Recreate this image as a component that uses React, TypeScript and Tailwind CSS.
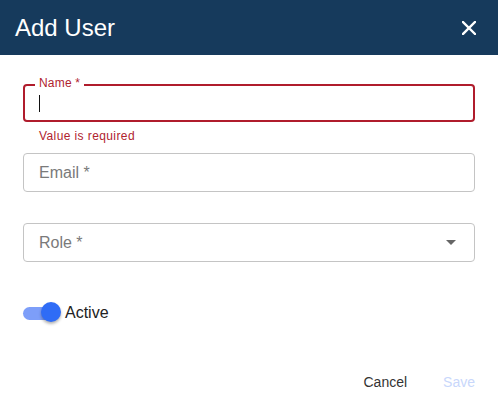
const sans = "font-['Liberation_Sans',Arial,sans-serif]"

function CloseIcon() {
  return (
    <svg width="14" height="14" viewBox="0 0 14 14" className="block">
      <path d="M1 1L13 13M13 1L1 13" stroke="#fff" strokeWidth="2.4" strokeLinecap="square" />
    </svg>
  )
}

function OutlinedBox({ label, children }: { label: string; children?: React.ReactNode }) {
  return (
    <div className="flex h-[39px] items-center rounded border border-[#c4c4c4] pl-[15px] pr-[18px]">
      <span className="flex-1 text-[16px] text-[#7a7a7a]">{label}</span>
      {children}
    </div>
  )
}

export default function App() {
  return (
    <div className={`${sans} h-[406px] w-[498px] overflow-hidden bg-white`}>
      <header className="flex h-[55px] items-center justify-between bg-[#163a5c] pl-[15px] pr-[22px]">
        <h2 className="text-[24px] leading-none text-white">Add User</h2>
        <button aria-label="Close" className="mt-px">
          <CloseIcon />
        </button>
      </header>

      <div className="px-[23px]">
        {/* Name, focused with an error */}
        <div className="relative mt-[29px] flex h-[38px] items-center rounded border-2 border-[#b01c2c] pl-[14px]">
          <span className="absolute -top-[10px] left-[10px] bg-white px-1 text-[12px] leading-[14px] tracking-[0.2px] text-[#b0232f]">
            Name *
          </span>
          <span className="h-[17px] w-px bg-[#111]" />
        </div>
        <p className="mt-[7px] pl-4 text-[12px] leading-[14px] tracking-[0.4px] text-[#b0232f]">Value is required</p>

        <div className="mt-[10px]">
          <OutlinedBox label="Email *" />
        </div>

        <div className="mt-[31px]">
          <OutlinedBox label="Role *">
            <svg width="10" height="5" viewBox="0 0 10 5" className="block">
              <path d="M0 0H10L5 5Z" fill="#666" />
            </svg>
          </OutlinedBox>
        </div>

        {/* Active switch */}
        <div className="mt-[39px] flex h-6 items-center">
          <div className="relative h-6 w-[40px]">
            <span className="absolute left-0 top-[6px] h-[13px] w-[34px] rounded-full bg-[#7d9ef9]" />
            <span className="absolute left-[18px] top-[1px] h-5 w-5 rounded-full bg-[#2f6cf6] shadow-[0_2px_3px_rgba(0,0,0,0.3)]" />
          </div>
          <span className="ml-[2px] text-[16px] text-[#222]">Active</span>
        </div>
      </div>

      <div className="mt-[47px] flex justify-end gap-9 pr-[23px] text-[14px] leading-5">
        <button className="text-[#333]">Cancel</button>
        <button className="text-[#c8d7fb]" disabled>
          Save
        </button>
      </div>
    </div>
  )
}
